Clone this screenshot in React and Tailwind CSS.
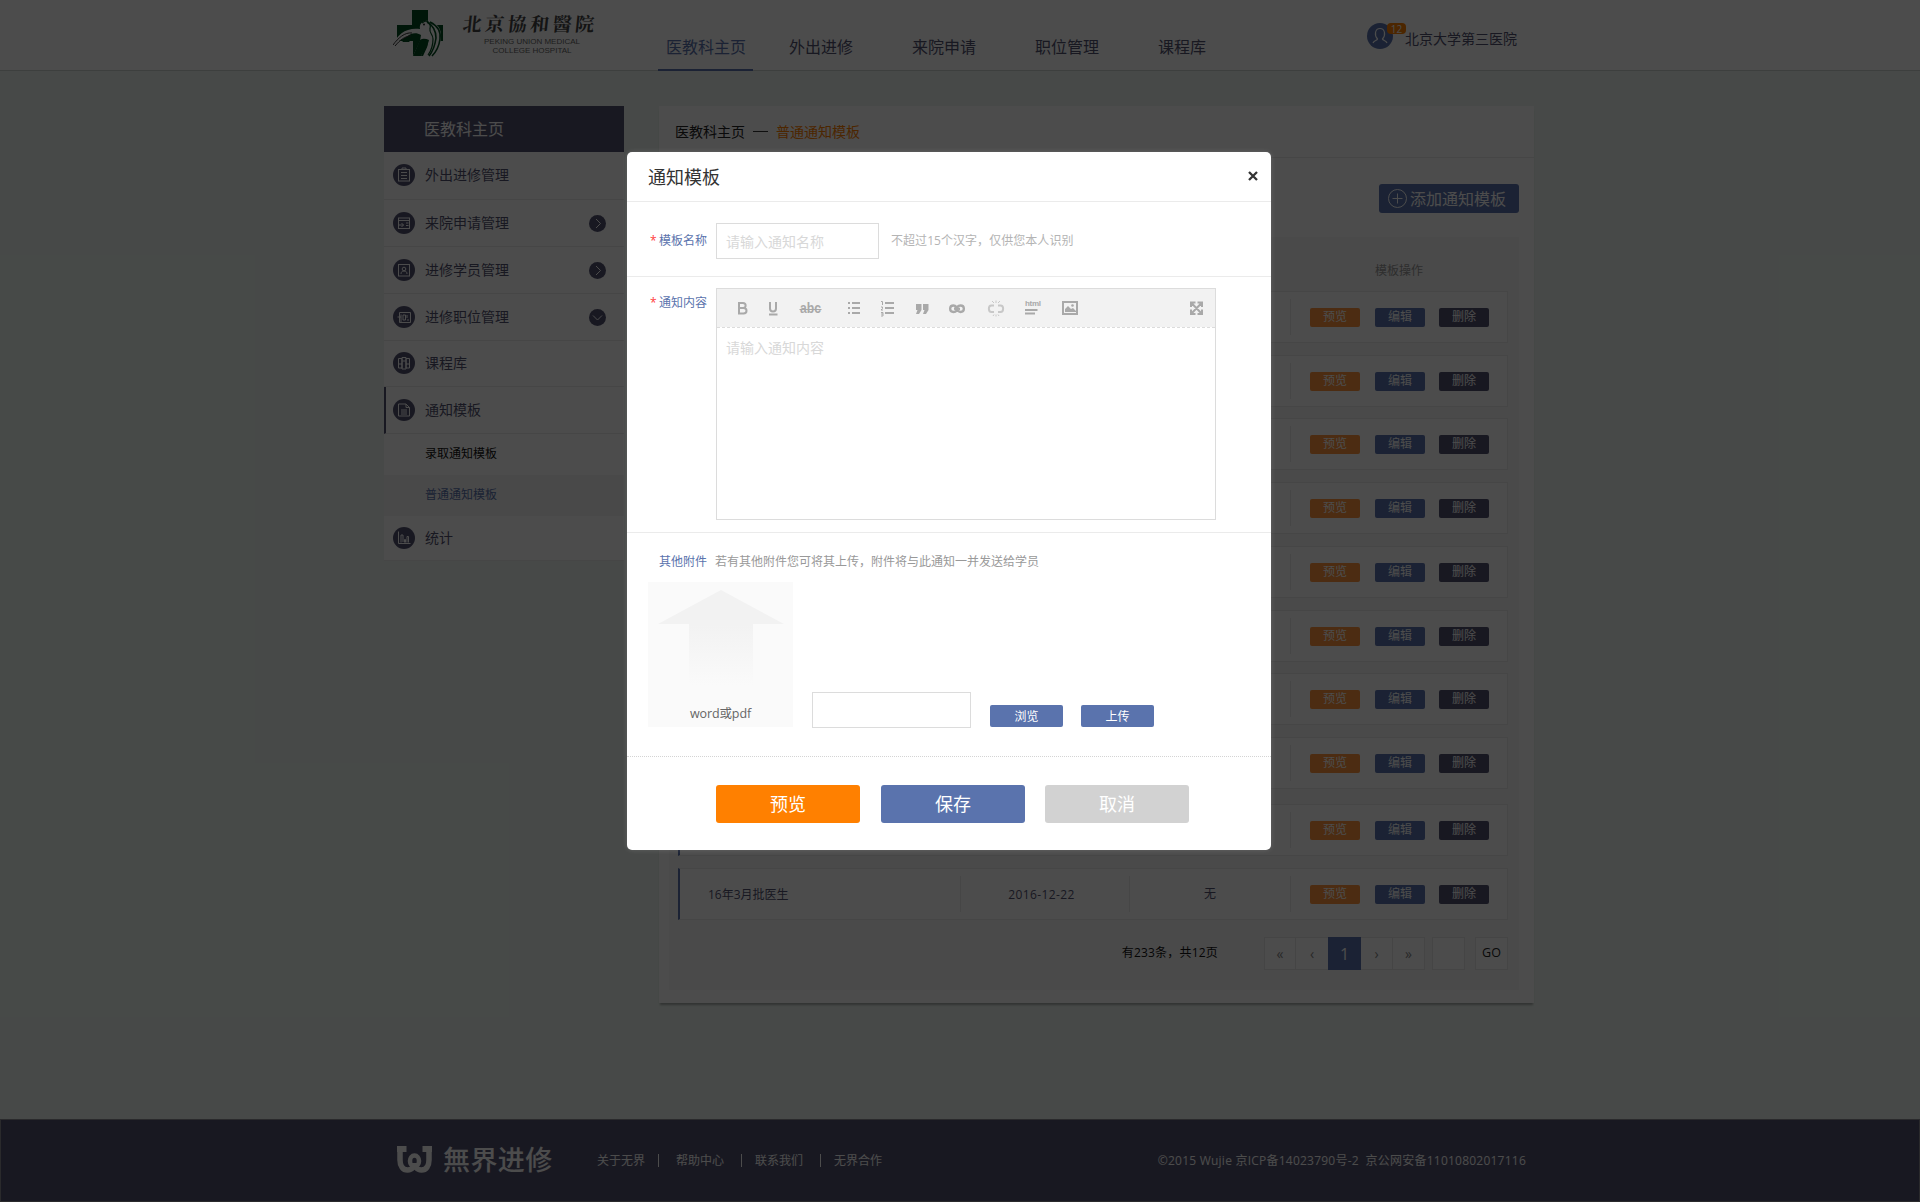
const navItems = ["外出进修", "来院申请", "职位管理", "课程库"];
const rows = [
  { gap: "mt-0" },
  { gap: "mt-3" },
  { gap: "mt-[11px]" },
  { gap: "mt-3" },
  { gap: "mt-3" },
  { gap: "mt-3" },
  { gap: "mt-[11px]" },
  { gap: "mt-3" },
  { gap: "mt-[15px]" },
  { gap: "mt-3", name: "16年3月批医生", date: "2016-12-22", files: "无" },
];

function HospitalLogo() {
  return (
    <svg width="50" height="48" viewBox="0 0 50 48" fill="none">
      <path d="M19 0h16v15h15v16H36v2L30 46H20V31H4V15h15z" fill="#004a1f" />
      <path d="M0 35C4 24 14 17 27 19c-1-5 3-9 8-8 9 1 14 8 13 17-1 8-5 15-9 18l-5 0 1-15c-2 5-5 9-7 15h-8l7-15 1-6c-5-3-10-2-15 2l-7 4c-3 1-5 3-6 4z" fill="#fff" />
      <path d="M27 30c3-2 6-1 9 0-1 5-5 10-8 16h-8z" fill="#004a1f" />
      <path d="M29 13l3-2c4 0 6 3 5 8-1 4 3 5 3 10 0 8-2 12-5 16" stroke="#004a1f" strokeWidth="1.200" />
      <path d="M34 12c7 4 9 9 9 16-1 8-3 13-7 18M37 12c8 4 11 10 10 17-1 8-4 13-8 17" stroke="#004a1f" strokeWidth="1.600" />
      <path d="M0 35c5-7 12-13 19-12M2 36c5-6 10-10 16-10" stroke="#333" strokeWidth="1" />
      <path d="M9 32l6-5h5l-4 5z" fill="#004a1f" />
      <circle cx="31" cy="14.500" r="1" fill="#222" />
    </svg>
  );
}

const glyphs = {
  clipboard: <><rect x="5.500" y="5.500" width="11" height="11.500" /><path d="M9 5.500V4h4v1.500M8 8.500h6M8 11.500h6M8 14.500h6" /></>,
  apply: <><rect x="5.500" y="6" width="11" height="10.500" /><path d="M6 8.500h11M5 13h5.500M8.500 11l2 2-2 2M13 11h2.500M13 13.500h2.500" /></>,
  student: <><rect x="5.500" y="5.500" width="11" height="11.500" /><circle cx="11" cy="10" r="1.800" /><path d="M8 15c0-2 1-3 3-3s3 1 3 3" /></>,
  job: <><path d="M6.500 6.500h11v10h-11zM8 8.500v8M4.500 11H8M10 9h2.500v5H10zM14 9v3M14 14h2" /></>,
  course: <><path d="M5.500 6.500h3.500v9.500H5.500zM9 5.500h4v11.500H9zM13 6.500h3.500v9.500H13zM6 12h3M13 12h3M9.500 9h3" /></>,
  doc: <><path d="M5.500 5h7.500l3.500 3.500V17h-11zM13 5v3.500h3.500M8 11h6M8 13h6M8 15h6" /></>,
  stats: <><path d="M5.500 4.500V16.500h12M8 15.500V8h2v7M11.500 15.500v-3h1v3M14 15.500v-6h1.500v6" /></>,
};

function Badge({ name }) {
  return (
    <svg width="22" height="22" viewBox="0 0 22 22" fill="none" stroke="#fff" strokeWidth="1" className="shrink-0">
      <circle cx="11" cy="11" r="11" fill="#535371" stroke="none" />
      {glyphs[name]}
    </svg>
  );
}

function Arrow({ down }) {
  return (
    <svg width="17" height="17" viewBox="0 0 17 17" fill="none" stroke="#fff" className="ml-auto mr-[18px] mt-px">
      <circle cx="8.500" cy="8.500" r="8.500" fill="#535371" stroke="none" />
      <path d={down ? "M4 6.500l4.500 4.500L13 6.500" : "M7 4l4.500 4.500L7 13"} />
    </svg>
  );
}

function SideItem({ icon, label, arrow, active, height = "h-[47px]" }) {
  return (
    <div className={`flex ${height} items-center border-b border-[#ececec] pb-px ${active ? "border-l-2 border-l-[#535371] pl-[7px]" : "pl-[9px]"}`}>
      <Badge name={icon} />
      <span className="mb-px ml-[10px] text-[14px] text-[#535371]">{label}</span>
      {arrow && <Arrow down={arrow === "down"} />}
    </div>
  );
}

function Sidebar() {
  return (
    <aside className="h-[455px] w-60 bg-white">
      <div className="flex h-[46px] items-center bg-[#535371] pl-10 text-[16px] text-white">医教科主页</div>
      <SideItem icon="clipboard" label="外出进修管理" height="h-[48px]" />
      <SideItem icon="apply" label="来院申请管理" arrow="right" />
      <SideItem icon="student" label="进修学员管理" arrow="right" />
      <SideItem icon="job" label="进修职位管理" arrow="down" />
      <SideItem icon="course" label="课程库" height="h-[46px]" />
      <SideItem icon="doc" label="通知模板" active />
      <div className="flex h-[41px] items-center pb-[2px] pl-[41px] text-[12px] text-[#111]">录取通知模板</div>
      <div className="flex h-[41px] items-center bg-[#f5f5f5] pb-[2px] pl-[41px] text-[12px] text-[#5a73ad]">普通通知模板</div>
      <SideItem icon="stats" label="统计" height="h-[45px]" />
    </aside>
  );
}

function TableRow({ gap, name, date, files }) {
  return (
    <div className={`flex h-[52px] border border-l-2 border-[#ececec] border-l-[#5a73ad] bg-white py-[7px] text-[12px] text-[#535371] ${gap}`}>
      <div className="flex w-[280px] items-center pl-7 pt-px">{name}</div>
      <div className="flex w-[169px] items-center justify-center border-l border-[#ececec] pr-[7px] pt-px tracking-[0.4px]">{date}</div>
      <div className="flex w-[161px] items-center justify-center border-l border-[#ececec]">{files}</div>
      <div className="flex flex-1 items-center border-l border-[#ececec] pl-[19px] text-white">
        <span className="flex h-[19px] w-[50px] items-center justify-center rounded-xs bg-[#ff943c]">预览</span>
        <span className="ml-[15px] flex h-[19px] w-[50px] items-center justify-center rounded-xs bg-[#5a73ad]">编辑</span>
        <span className="ml-[14px] flex h-[19px] w-[50px] items-center justify-center rounded-xs bg-[#535371]">删除</span>
      </div>
    </div>
  );
}

function Pager() {
  return (
    <div className="mt-[17px] flex h-[33px] items-center justify-end text-[12px]">
      <span className="mb-[2px] mr-[46px] tracking-[0.2px] text-[#111]">有233条，共12页</span>
      <div className="flex h-[33px] border border-r-0 border-[#e8e8e8] bg-white text-[#888]">
        <span className="flex w-[31px] items-center justify-center border-r border-[#e8e8e8] text-[14px]">«</span>
        <span className="flex w-8 items-center justify-center text-[14px]">‹</span>
        <span className="-my-px flex w-[33px] items-center justify-center bg-[#5a73ad] text-[16px] text-white">1</span>
        <span className="flex w-8 items-center justify-center border-r border-[#e8e8e8] text-[14px]">›</span>
        <span className="flex w-8 items-center justify-center border-r border-[#e8e8e8] text-[14px]">»</span>
      </div>
      <span className="ml-[7px] h-[33px] w-[33px] border border-[#e8e8e8] bg-white" />
      <span className="ml-[10px] flex h-[33px] w-[33px] items-center justify-center border border-[#e8e8e8] bg-white text-[12.5px] text-[#222]">GO</span>
    </div>
  );
}

function Main() {
  return (
    <main className="ml-[35px] h-[897px] w-[875px] bg-white shadow-[0_3px_2px_-1px_rgba(0,0,0,0.3)]">
      <div className="flex h-[52px] items-center border-b border-[#ececec] pl-[16px] text-[14px]">
        <span className="text-[#222]">医教科主页</span>
        <span className="ml-2 h-px w-[15px] bg-[#333]" />
        <span className="ml-2 text-[#ff8000]">普通通知模板</span>
      </div>
      <div className="flex h-[79px] justify-end pr-[15px] pt-[26px]">
        <button className="flex h-[29px] w-[140px] items-center rounded-[3px] bg-[#5a73ad] pl-[9px] text-[16px] text-white">
          <svg width="19" height="19" viewBox="0 0 19 19" fill="none" stroke="#fff" className="mr-[3px]">
            <circle cx="9.500" cy="9.500" r="9" />
            <path d="M9.500 4.500v10M4.500 9.500h10" />
          </svg>
          添加通知模板
        </button>
      </div>
      <div className="ml-[10px] h-[753px] w-[850px] bg-[#f8f8f8] pl-[9px] pr-[11px]">
        <div className="flex h-[54px] justify-end pr-[85px] pt-[25px] text-[12px] leading-[18px] text-[#999]">模板操作</div>
        {rows.map((row, i) => <TableRow key={i} {...row} />)}
        <Pager />
      </div>
    </main>
  );
}

function Header() {
  return (
    <header className="h-[71px] border-b border-[#ccd3d1] bg-white">
      <div className="ml-[384px] flex h-[71px] w-[1150px]">
        <div className="flex w-[274px] pl-[9px] pt-[10px]">
          <HospitalLogo />
          <div className="ml-[19px] flex w-[138px] flex-col items-center whitespace-nowrap">
            <div className="-skew-x-6 text-[19px] font-bold leading-[25px] tracking-[3.500px] text-[#444]" style={{ fontFamily: '"Noto Serif CJK SC", "Noto Sans CJK TC", serif' }}>北京協和醫院</div>
            <div className="ml-[2px] mt-[2px] text-center font-['Liberation_Sans',sans-serif] text-[8px] leading-[9px] text-[#666]">
              PEKING UNION MEDICAL<br />COLLEGE HOSPITAL
            </div>
          </div>
        </div>
        <nav className="flex h-[71px] text-[16px] leading-6 text-[#535371]">
          <span className="w-[95px] border-b-2 border-[#5a73ad] pl-2 pt-[35px] text-[#5a73ad]">医教科主页</span>
          <div className="ml-[36px] flex gap-[59px] pt-[35px]">
            {navItems.map((n) => <span key={n}>{n}</span>)}
          </div>
        </nav>
        <div className="relative ml-auto flex pr-[17px] pt-[23px]">
          <svg width="26" height="26" viewBox="0 0 26 26" fill="none" stroke="#fff" strokeWidth="1.200">
            <circle cx="13" cy="13" r="13" fill="#5a73ad" stroke="none" />
            <path d="M6 20c1-3 4-2 4.500-4C7 12 8 5.500 13 5.500S19 12 15.500 16c.5 2 3.500 1 4.500 4" />
          </svg>
          <span className="absolute left-5 top-[23px] flex h-[11px] w-[19px] items-center justify-center rounded-[4px] bg-[#ff8000] text-[10px] leading-none text-white">12</span>
          <span className="ml-[12px] mt-[5px] text-[14px] leading-[22px] text-[#535371]">北京大学第三医院</span>
        </div>
      </div>
    </header>
  );
}

function Footer() {
  return (
    <footer className="mt-[116px] flex h-[83px] items-center border border-[#8e8e93] bg-[#535371] pl-[396px] pr-[393px] text-[12px] text-white">
      <svg width="35" height="27" viewBox="0 0 35 27" fill="none" stroke="#fff" className="mb-[2px]">
        <path d="M0 3h9.500M25.500 3H35" strokeWidth="6" />
        <path d="M3 3v11c0 6 3 10 7.500 10 5 0 7-4 7-7M32 3v11c0 6-3 10-7.500 10-5 0-7-4-7-7" strokeWidth="5.500" />
        <ellipse cx="17.500" cy="15" rx="4.500" ry="5.500" strokeWidth="4.500" />
      </svg>
      <span className="mb-[3px] ml-[11px] w-[154px] text-[27px] font-medium leading-none tracking-[0.4px]">無界进修</span>
      <span>关于无界</span><i className="ml-[13px] mr-[17px] h-[13px] w-px bg-white" />
      <span>帮助中心</span><i className="ml-[17px] mr-[13px] h-[13px] w-px bg-white" />
      <span>联系我们</span><i className="ml-[17px] mr-[13px] h-[13px] w-px bg-white" />
      <span>无界合作</span>
      <span className="ml-auto whitespace-pre tracking-[0.23px]">©2015 Wujie 京ICP备14023790号-2  京公网安备11010802017116</span>
    </footer>
  );
}

function Toolbar() {
  return (
    <svg width="498" height="38" viewBox="0 0 498 38" fill="none" stroke="#a9a9a9" strokeWidth="2" className="block bg-[#f2f2f2]">
      <path d="M22 14v10M21 14h5c3.500 0 3.500 5 0 5h-4 4.500c4 0 4 5.500 0 5.500H21" />
      <path d="M53 13v6.500c0 4 6 4 6 0V13M52 25.500h8.500" />
      <text x="83" y="24" fontSize="15" fontWeight="bold" fontFamily="Liberation Sans, sans-serif" fill="#a9a9a9" stroke="none" textLength="21" lengthAdjust="spacingAndGlyphs">abc</text>
      <path d="M82.500 20.500h22" strokeWidth="1" />
      <path d="M131 14h2m2 0h8M131 19h2m2 0h8M131 24h2m2 0h8M168 14h9M168 19h9M168 24h9" />
      <path d="M164 12.500h1.500v3.500M164 18h1.500v1.500l-1.500 1.500h2M164 23.500h2v3.500h-2m0-2h2" strokeWidth="1" />
      <path d="M199 15h5.500v6l-2.500 4H199l1.500-4H199zM206 15h5.500v6l-2.500 4H206l1.500-4H206z" fill="#a9a9a9" stroke="none" />
      <path d="M240 21.500c-1 1-2 1.500-3.500 1.500-4.500 0-4.500-6.500 0-6.500 3 0 3.500 3.500 6.500 3.500M240 18c1-1 2-1.500 3.500-1.500 4.500 0 4.500 6.500 0 6.500-3 0-3.500-3.500-6.500-3.500" strokeWidth="2.300" />
      <g stroke="#c8c8c8"><path d="M277 16.500h-2.500c-3.500 0-3.500 6.500 0 6.500h2.500M281 16.500h2.500c3.500 0 3.500 6.500 0 6.500H281" /><path d="M275 12l2 2M279 11.500v2.500M283 12l-2 2M276 27l1-1.500M279 27.500v-2M282 27l-1-1.500" strokeWidth="1" /></g>
      <text x="308" y="17" fontSize="8" fontWeight="bold" fontFamily="Liberation Sans, sans-serif" fill="#a9a9a9" stroke="none" textLength="16">html</text>
      <path d="M308 21h12.500M308 24.500h10" />
      <rect x="346" y="13" width="14" height="12" />
      <path d="M348 23v-3l3-3 3 3 2-1 3 3v1z" fill="#a9a9a9" stroke="none" />
      <circle cx="355.500" cy="16.500" r="1.300" fill="#a9a9a9" stroke="none" />
      <path d="M474 18v-4.500h4.500M480.500 13.500h4.500v4.500M485 20.500v4.500h-4.500M478.500 25H474v-4.500M474 13.500l11 11.500M485 13.500l-11 11.500" strokeWidth="2" />
    </svg>
  );
}

function Label({ required, children }) {
  return (
    <div className="flex w-[67px] text-[12px] leading-[18px] text-[#5a73ad]">
      <span className="w-[11px] pl-[2px] text-[#ff3b3b]">{required ? "*" : ""}</span>
      {children}
    </div>
  );
}

function Modal() {
  return (
    <section className="absolute left-[627px] top-[152px] h-[698px] w-[644px] rounded-[5px] bg-white shadow-[0_0_5px_rgba(255,255,255,0.15)]">
      <div className="flex h-[50px] items-center justify-between border-b border-[#ebebeb] pb-px pl-[21px] pr-[13px] pt-[3px]">
        <h2 className="text-[18px] text-[#333]">通知模板</h2>
        <svg width="10" height="10" viewBox="0 0 10 10" stroke="#333" strokeWidth="2.300" className="mb-1">
          <path d="M1 1l8 8M9 1l-8 8" />
        </svg>
      </div>
      <div className="flex h-[75px] items-center border-b border-[#ebebeb] pl-[21px] pt-1">
        <Label required>模板名称</Label>
        <div className="ml-px flex h-9 w-[163px] items-center border border-[#dcdcdc] pl-[9px] text-[14px] text-[#d8d8d8]">请输入通知名称</div>
        <span className="ml-3 text-[12px] tracking-[0.05px] text-[#b4b4b4]">不超过15个汉字，仅供您本人识别</span>
      </div>
      <div className="flex h-[256px] border-b border-[#ebebeb] pl-[21px] pt-[11px]">
        <div className="pt-[6px]"><Label required>通知内容</Label></div>
        <div className="ml-px h-[232px] w-[500px] border border-[#dcdcdc]">
          <div className="border-b border-dashed border-[#dcdcdc]"><Toolbar /></div>
          <div className="pl-[9px] pt-[9px] text-[14px] leading-[22px] text-[#d8d8d8]">请输入通知内容</div>
        </div>
      </div>
      <div className="h-[224px] border-b border-dotted border-[#d4d4d4] pl-[21px] pt-5">
        <div className="flex leading-[18px]">
          <Label>其他附件</Label>
          <span className="text-[12px] text-[#999]">若有其他附件您可将其上传，附件将与此通知一并发送给学员</span>
        </div>
        <div className="mt-[11px] flex items-end">
          <div className="h-[145px] w-[145px] bg-[#fafafa] pt-2 text-center">
            <svg width="126" height="104" viewBox="0 0 126 104" className="ml-[10px] block">
              <defs>
                <linearGradient id="shaft" x1="0" y1="0" x2="0" y2="1">
                  <stop offset="0.350" stopColor="#f2f2f2" />
                  <stop offset="0.950" stopColor="#fafafa" />
                </linearGradient>
              </defs>
              <path d="M63 0l63 34H95v66H31V34H0z" fill="url(#shaft)" />
            </svg>
            <div className="mt-[10px] text-[12.500px] leading-5 tracking-[-0.1px] text-[#666]">word或pdf</div>
          </div>
          <div className="-mb-px ml-[19px] h-9 w-[159px] border border-[#dcdcdc]" />
          <button className="ml-[19px] h-[22px] w-[73px] rounded-xs bg-[#5a73ad] pt-px text-[12px] text-white">浏览</button>
          <button className="ml-[18px] h-[22px] w-[73px] rounded-xs bg-[#5a73ad] pt-px text-[12px] text-white">上传</button>
        </div>
      </div>
      <div className="flex pl-[89px] pt-7 text-[18px] text-white">
        <button className="h-[38px] w-36 rounded-[3px] bg-[#ff8000]">预览</button>
        <button className="ml-[21px] h-[38px] w-36 rounded-[3px] bg-[#5a73ad]">保存</button>
        <button className="ml-5 h-[38px] w-36 rounded-[3px] bg-[#d2d2d2]">取消</button>
      </div>
    </section>
  );
}

export default function App() {
  return (
    <div className="relative h-[1202px] w-[1920px] overflow-hidden bg-[#edf6f0] font-['Open_Sans','Noto_Sans_CJK_SC',sans-serif]">
      <Header />
      <div className="ml-[384px] mt-[35px] flex items-start">
        <Sidebar />
        <Main />
      </div>
      <Footer />
      <div className="absolute inset-0 bg-black/70" />
      <Modal />
    </div>
  );
}
